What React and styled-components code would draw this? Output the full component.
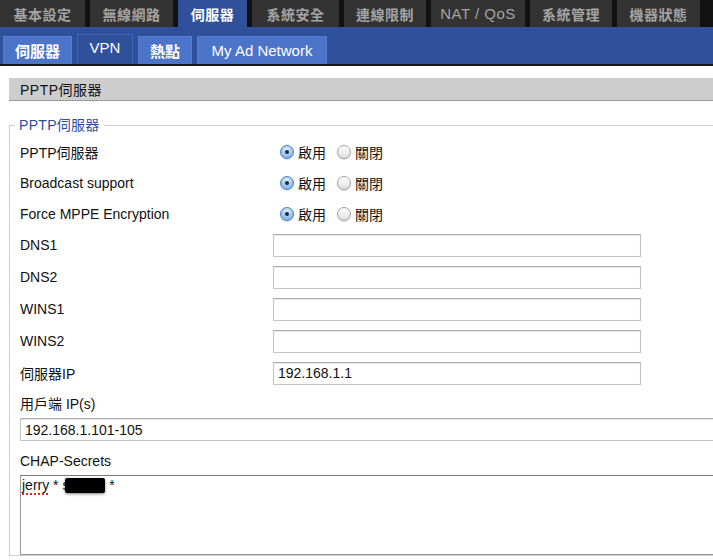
import styled, { createGlobalStyle } from "styled-components";

const GlobalStyle = createGlobalStyle`
  html, body {
    margin: 0;
    padding: 0;
    background: #fff;
    overflow: hidden;
  }
  body {
    font-family: "Liberation Sans", "Noto Sans CJK TC", sans-serif;
    color: #111;
  }
`;

const mainTabs = [
  { label: "基本設定", width: 85 },
  { label: "無線網路", width: 83 },
  { label: "伺服器", width: 69, active: true },
  { label: "系統安全", width: 87 },
  { label: "連線限制", width: 82 },
  { label: "NAT / QoS", width: 94, latin: true },
  { label: "系統管理", width: 82 },
  { label: "機器狀態", width: 83 },
];

const subTabs = [
  { label: "伺服器", width: 69 },
  { label: "VPN", width: 56, active: true, latin: true },
  { label: "熱點", width: 54 },
  { label: "My Ad Network", width: 130, latin: true },
];

const radioRows = ["PPTP伺服器", "Broadcast support", "Force MPPE Encryption"];
const inputRows = [
  { label: "DNS1", value: "" },
  { label: "DNS2", value: "" },
  { label: "WINS1", value: "" },
  { label: "WINS2", value: "" },
  { label: "伺服器IP", value: "192.168.1.1" },
];

const App = () => {
  return (
    <>
      <GlobalStyle />
      <Page>
        <TopNav>
          {mainTabs.map((tab) => (
            <MainTab key={tab.label} $width={tab.width} $active={tab.active} $latin={tab.latin}>
              {tab.label}
            </MainTab>
          ))}
        </TopNav>
        <SubNav>
          {subTabs.map((tab) => (
            <SubTab key={tab.label} $width={tab.width} $active={tab.active} $latin={tab.latin}>
              {tab.label}
            </SubTab>
          ))}
        </SubNav>

        <Content>
          <SectionHeader>PPTP伺服器</SectionHeader>
          <Group>
            <Legend>PPTP伺服器</Legend>

            {radioRows.map((label) => (
              <Row key={label} $height={31}>
                <Label>{label}</Label>
                <RadioGroup>
                  <Radio $checked>
                    <Dot />
                  </Radio>
                  <RadioText>啟用</RadioText>
                  <Radio />
                  <RadioText>關閉</RadioText>
                </RadioGroup>
              </Row>
            ))}

            {inputRows.map((row) => (
              <Row key={row.label} $height={32}>
                <Label>{row.label}</Label>
                <TextBox>{row.value}</TextBox>
              </Row>
            ))}

            <BlockLabel $top={6}>用戶端 IP(s)</BlockLabel>
            <WideBox>192.168.1.101-105</WideBox>

            <BlockLabel $top={11}>CHAP-Secrets</BlockLabel>
            <Secrets>
              <Misspelled>jerry</Misspelled> * s<Redacted /> *
            </Secrets>
          </Group>
        </Content>
      </Page>
    </>
  );
};

const Page = styled.div`
  width: 740px;
  height: 560px;
  overflow: hidden;
`;

const TopNav = styled.div`
  display: flex;
  gap: 5px;
  height: 27px;
  background: #121212;
`;

const MainTab = styled.div`
  width: ${({ $width }) => `${$width}px`};
  display: flex;
  align-items: center;
  justify-content: center;
  background: ${({ $active }) => ($active ? "#2f519b" : "#333333")};
  color: ${({ $active }) => ($active ? "#ffffff" : "#a4a4a4")};
  font-size: ${({ $latin }) => ($latin ? "15px" : "14px")};
  font-weight: ${({ $latin }) => ($latin ? "normal" : "bold")};
  letter-spacing: 0.5px;
`;

const SubNav = styled.div`
  display: flex;
  align-items: flex-end;
  gap: 5px;
  height: 37px;
  padding-left: 3px;
  background: #2f519b;
  border-bottom: 2px solid #141414;
`;

const SubTab = styled.div`
  width: ${({ $width }) => `${$width}px`};
  height: ${({ $active }) => ($active ? "30px" : "28px")};
  box-sizing: border-box;
  display: flex;
  align-items: center;
  justify-content: center;
  background: ${({ $active }) => ($active ? "#2f519b" : "#4c74c8")};
  border: 1px solid ${({ $active }) => ($active ? "#4467b4" : "#557cd0")};
  border-bottom: none;
  color: #ffffff;
  font-size: 15px;
  font-weight: ${({ $latin }) => ($latin ? "normal" : "bold")};
  padding-bottom: ${({ $active }) => ($active ? "4px" : "0")};
`;

const Content = styled.div`
  padding: 12px 0 0 9px;
`;

const SectionHeader = styled.div`
  height: 22px;
  display: flex;
  align-items: center;
  padding-left: 11px;
  background: #cdcdcd;
  border-bottom: 1px solid #9a9a9a;
  font-size: 14px;
  letter-spacing: 0.5px;
`;

const Group = styled.fieldset`
  margin: 15px 0 0;
  padding: 2px 0 0 10px;
  border: 1px solid #cfcfcf;
  border-right: none;
  min-width: 0;
`;

const Legend = styled.legend`
  padding: 0 4px;
  margin-left: -5px;
  line-height: 18px;
  font-size: 14px;
  color: #2f4d9a;
  letter-spacing: 0.3px;
`;

const Row = styled.div`
  display: flex;
  align-items: center;
  height: ${({ $height }) => `${$height}px`};
`;

const Label = styled.div`
  width: 253px;
  font-size: 14px;
`;

const RadioGroup = styled.div`
  display: flex;
  align-items: center;
  padding-left: 7px;
`;

const Radio = styled.span`
  width: 14px;
  height: 14px;
  box-sizing: border-box;
  border-radius: 50%;
  display: flex;
  align-items: center;
  justify-content: center;
  border: 1px solid ${({ $checked }) => ($checked ? "#4f7fc2" : "#a0a0a0")};
  background: ${({ $checked }) =>
    $checked
      ? "radial-gradient(circle at 50% 30%, #e4f0fc 0%, #a9cbf1 45%, #6ea2e2 100%)"
      : "linear-gradient(#ffffff, #dedede)"};
  box-shadow: 0 1px 1px rgba(0, 0, 0, 0.15);
`;

const Dot = styled.span`
  width: 4px;
  height: 4px;
  border-radius: 50%;
  background: #1b2740;
`;

const RadioText = styled.span`
  font-size: 14px;
  margin: 0 11px 0 4px;
`;

const TextBox = styled.div`
  width: 368px;
  height: 23px;
  box-sizing: border-box;
  padding: 0 4px;
  display: flex;
  align-items: center;
  border: 1px solid #c4c4c4;
  border-top-color: #a9a9a9;
  box-shadow: inset 0 1px 1px #ececec;
  font-size: 14px;
`;

const BlockLabel = styled.div`
  margin-top: ${({ $top }) => `${$top}px`};
  line-height: 18px;
  font-size: 14px;
`;

const WideBox = styled(TextBox)`
  width: 720px;
  margin-top: 5px;
`;

const Secrets = styled.div`
  width: 720px;
  height: 80px;
  margin-top: 5px;
  box-sizing: border-box;
  padding: 1px 1px;
  border: 1px solid #9a9a9a;
  border-top-color: #7a7a7a;
  font-size: 14px;
  line-height: 17px;
  white-space: pre;
`;

const Misspelled = styled.span`
  text-decoration: underline dotted #e0251b;
  text-decoration-thickness: 2px;
  text-underline-offset: 3px;
`;

const Redacted = styled.span`
  display: inline-block;
  vertical-align: -3px;
  width: 40px;
  height: 15px;
  margin-left: -4px;
  border-radius: 2px;
  background: #000;
  box-shadow: 0 1px 3px rgba(0, 0, 0, 0.5);
`;

export default App;
